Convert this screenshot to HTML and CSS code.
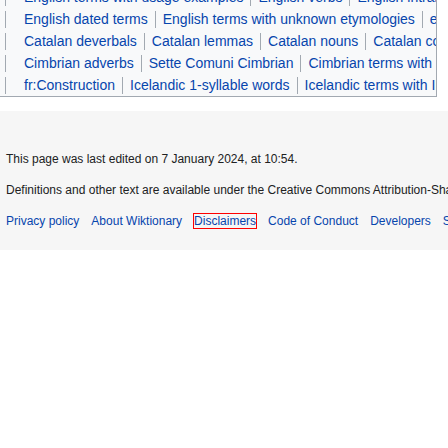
FILE: index.html
```html
<!DOCTYPE html>
<html lang="en">
<head>
<meta charset="utf-8">
<title>Wiktionary footer</title>
<link rel="stylesheet" href="styles.css">
</head>
<body>
<div class="catlinks">
  <ul class="row">
    <li><a href="#">English terms with usage examples</a></li>
    <li><a href="#">English verbs</a></li>
    <li><a href="#">English intransitive verbs</a></li>
  </ul>
  <ul class="row">
    <li><a href="#">English dated terms</a></li>
    <li><a href="#">English terms with unknown etymologies</a></li>
    <li><a href="#">en:Construction</a></li>
  </ul>
  <ul class="row">
    <li><a href="#">Catalan deverbals</a></li>
    <li><a href="#">Catalan lemmas</a></li>
    <li><a href="#">Catalan nouns</a></li>
    <li><a href="#">Catalan countable nouns</a></li>
  </ul>
  <ul class="row">
    <li><a href="#">Cimbrian adverbs</a></li>
    <li><a href="#">Sette Comuni Cimbrian</a></li>
    <li><a href="#">Cimbrian terms with usage examples</a></li>
  </ul>
  <ul class="row">
    <li><a href="#">fr:Construction</a></li>
    <li><a href="#">Icelandic 1-syllable words</a></li>
    <li><a href="#">Icelandic terms with IPA pronunciation</a></li>
  </ul>
</div>
<footer class="footer">
  <p class="footer-line">This page was last edited on 7 January 2024, at 10:54.</p>
  <p class="footer-line">Definitions and other text are available under the Creative Commons Attribution-ShareAlike License; additional terms may apply.</p>
  <ul class="places">
    <li><a href="#">Privacy policy</a></li>
    <li><a href="#">About Wiktionary</a></li>
    <li><a href="#" class="flagged">Disclaimers</a></li>
    <li><a href="#">Code of Conduct</a></li>
    <li><a href="#">Developers</a></li>
    <li><a href="#">Statistics</a></li>
    <li><a href="#">Cookie statement</a></li>
  </ul>
</footer>
</body>
</html>
```

FILE: styles.css
```css
html, body {
  margin: 0;
  padding: 0;
  background: #ffffff;
  overflow: hidden;
}
body {
  width: 448px;
  height: 448px;
  font-family: "Liberation Sans", Arial, sans-serif;
  color: #202122;
}
a {
  color: #0645ad;
  text-decoration: none;
}
.catlinks {
  width: 436px;
  margin-top: -14px;
  background: #f8f9fa;
  border: 1px solid #a2a9b1;
  border-top: 0;
  border-left: 0;
  overflow: hidden;
}
.row {
  list-style: none;
  margin: 0;
  padding: 0 0 0 5px;
  height: 22px;
  display: flex;
  align-items: center;
  white-space: nowrap;
}
.row li {
  flex: none;
  font-size: 14px;
  line-height: 17px;
  border-left: 1px solid #a2a9b1;
  padding: 0 7px;
}
.row li:first-child {
  padding-left: 18px;
}
.footer {
  margin-top: 14px;
  background: #f6f6f6;
  padding: 39px 0 20px 6px;
  font-size: 12px;
  white-space: nowrap;
  overflow: hidden;
}
.footer-line {
  margin: 0 0 13px 0;
  line-height: 18px;
}
.places {
  list-style: none;
  margin: 0;
  padding: 0;
  display: flex;
  line-height: 18px;
}
.places li {
  flex: none;
  margin-right: 12px;
}
.flagged {
  outline: 1px solid #ff0000;
}
```
